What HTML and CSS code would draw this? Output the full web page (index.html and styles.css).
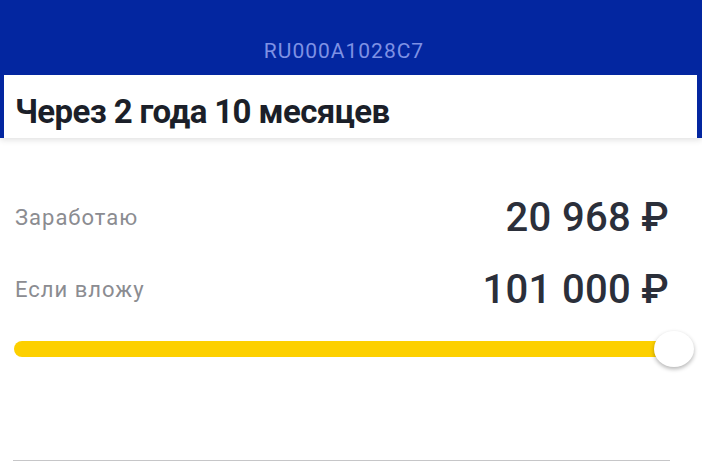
FILE: index.html
```html
<!DOCTYPE html>
<html lang="ru">
<head>
<meta charset="utf-8">
<link rel="stylesheet" href="styles.css">
</head>
<body>
<div class="top">
  <div class="code">RU000A1028C7</div>
  <div class="card-head">
    <h1 class="title">Через 2 года 10 месяцев</h1>
  </div>
</div>
<div class="card-body">
  <div class="row row-earn">
    <span class="label">Заработаю</span>
    <span class="value">20 968 ₽</span>
  </div>
  <div class="row row-invest">
    <span class="label">Если вложу</span>
    <span class="value">101 000 ₽</span>
  </div>
  <div class="slider">
    <div class="track"></div>
    <div class="knob"></div>
  </div>
  <div class="divider"></div>
</div>
</body>
</html>
```

FILE: styles.css
```css
html, body {
  margin: 0;
  padding: 0;
  background: #ffffff;
  font-family: Roboto, "Noto Sans", sans-serif;
  width: 702px;
  height: 470px;
  overflow: hidden;
}
.top {
  background: #0326a0;
  height: 138px;
  display: flex;
  flex-direction: column;
  box-shadow: 0 2px 6px rgba(0, 0, 0, 0.12);
  position: relative;
  z-index: 1;
}
.code {
  height: 75px;
  box-sizing: border-box;
  padding: 37px 14px 0 0;
  text-align: center;
  color: #7e91e4;
  font-size: 21px;
  line-height: 28px;
  letter-spacing: 1px;
}
.card-head {
  flex: 1;
  margin: 0 5px 0 4px;
  background: #ffffff;
  padding: 17px 0 0 11px;
}
.title {
  margin: 0;
  font-size: 33px;
  line-height: 40px;
  font-weight: 700;
  color: #1b1f29;
  letter-spacing: -0.6px;
}
.card-body {
  padding: 55px 33px 0 15px;
}
.row {
  display: flex;
  justify-content: space-between;
  align-items: center;
  height: 48px;
}
.row-invest {
  margin-top: 24px;
}
.label {
  font-size: 22px;
  color: #8b8c91;
  letter-spacing: 1px;
}
.value {
  font-size: 40px;
  font-weight: 500;
  color: #2b2f3a;
  letter-spacing: 0.3px;
}
.slider {
  position: relative;
  margin: 16px -25px 0 -1px;
  height: 40px;
  display: flex;
  align-items: center;
}
.track {
  flex: 1;
  height: 16px;
  border-radius: 8px;
  background: #fdd000;
  margin-right: 20px;
}
.knob {
  position: absolute;
  right: 0;
  top: 2px;
  width: 40px;
  height: 36px;
  border-radius: 50%;
  background: #ffffff;
  box-shadow: 0 2px 4px rgba(0, 0, 0, 0.3);
}
.divider {
  margin: 91px -1px 0 -2px;
  height: 1px;
  background: #c6c6c8;
}
```
